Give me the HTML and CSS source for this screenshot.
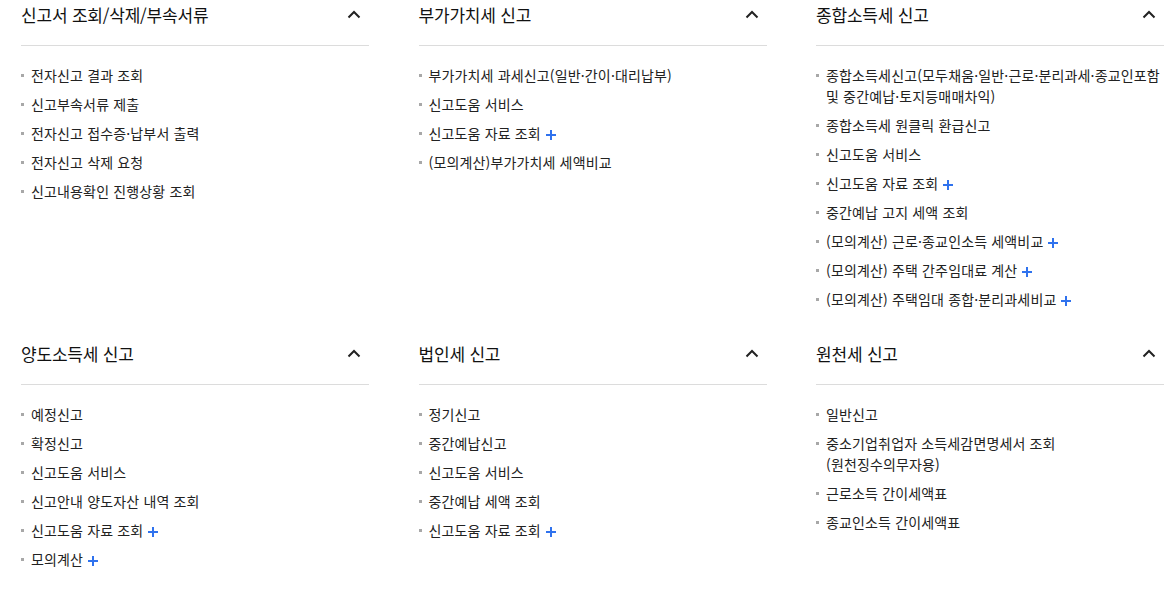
FILE: index.html
```html
<!DOCTYPE html>
<html lang="ko">
<head>
<meta charset="utf-8">
<title>신고</title>
<link rel="stylesheet" href="styles.css">
</head>
<body>
<div class="menu">
  <section class="group">
    <div class="group-head">
      <h2 class="group-title">신고서 조회/삭제/부속서류</h2>
      <svg class="chev" width="14" height="9" viewBox="0 0 14 9"><path d="M1.5 7.5 L7 2 L12.5 7.5" fill="none" stroke="#222" stroke-width="2"/></svg>
    </div>
    <ul class="items">
      <li>전자신고 결과 조회</li>
      <li>신고부속서류 제출</li>
      <li>전자신고 접수증·납부서 출력</li>
      <li>전자신고 삭제 요청</li>
      <li>신고내용확인 진행상황 조회</li>
    </ul>
  </section>
  <section class="group">
    <div class="group-head">
      <h2 class="group-title">부가가치세 신고</h2>
      <svg class="chev" width="14" height="9" viewBox="0 0 14 9"><path d="M1.5 7.5 L7 2 L12.5 7.5" fill="none" stroke="#222" stroke-width="2"/></svg>
    </div>
    <ul class="items">
      <li>부가가치세 과세신고(일반·간이·대리납부)</li>
      <li>신고도움 서비스</li>
      <li>신고도움 자료 조회<span class="plus"></span></li>
      <li>(모의계산)부가가치세 세액비교</li>
    </ul>
  </section>
  <section class="group">
    <div class="group-head">
      <h2 class="group-title">종합소득세 신고</h2>
      <svg class="chev" width="14" height="9" viewBox="0 0 14 9"><path d="M1.5 7.5 L7 2 L12.5 7.5" fill="none" stroke="#222" stroke-width="2"/></svg>
    </div>
    <ul class="items">
      <li>종합소득세신고(모두채움·일반·근로·분리과세·종교인포함 및 중간예납·토지등매매차익)</li>
      <li>종합소득세 원클릭 환급신고</li>
      <li>신고도움 서비스</li>
      <li>신고도움 자료 조회<span class="plus"></span></li>
      <li>중간예납 고지 세액 조회</li>
      <li>(모의계산) 근로·종교인소득 세액비교<span class="plus"></span></li>
      <li>(모의계산) 주택 간주임대료 계산<span class="plus"></span></li>
      <li>(모의계산) 주택임대 종합·분리과세비교<span class="plus"></span></li>
    </ul>
  </section>
  <section class="group">
    <div class="group-head">
      <h2 class="group-title">양도소득세 신고</h2>
      <svg class="chev" width="14" height="9" viewBox="0 0 14 9"><path d="M1.5 7.5 L7 2 L12.5 7.5" fill="none" stroke="#222" stroke-width="2"/></svg>
    </div>
    <ul class="items">
      <li>예정신고</li>
      <li>확정신고</li>
      <li>신고도움 서비스</li>
      <li>신고안내 양도자산 내역 조회</li>
      <li>신고도움 자료 조회<span class="plus"></span></li>
      <li>모의계산<span class="plus"></span></li>
    </ul>
  </section>
  <section class="group">
    <div class="group-head">
      <h2 class="group-title">법인세 신고</h2>
      <svg class="chev" width="14" height="9" viewBox="0 0 14 9"><path d="M1.5 7.5 L7 2 L12.5 7.5" fill="none" stroke="#222" stroke-width="2"/></svg>
    </div>
    <ul class="items">
      <li>정기신고</li>
      <li>중간예납신고</li>
      <li>신고도움 서비스</li>
      <li>중간예납 세액 조회</li>
      <li>신고도움 자료 조회<span class="plus"></span></li>
    </ul>
  </section>
  <section class="group">
    <div class="group-head">
      <h2 class="group-title">원천세 신고</h2>
      <svg class="chev" width="14" height="9" viewBox="0 0 14 9"><path d="M1.5 7.5 L7 2 L12.5 7.5" fill="none" stroke="#222" stroke-width="2"/></svg>
    </div>
    <ul class="items">
      <li>일반신고</li>
      <li>중소기업취업자 소득세감면명세서 조회<br>(원천징수의무자용)</li>
      <li>근로소득 간이세액표</li>
      <li>종교인소득 간이세액표</li>
    </ul>
  </section>
</div>
</body>
</html>
```

FILE: styles.css
```css
* { box-sizing: border-box; }
html, body {
  margin: 0;
  padding: 0;
  background: #fff;
}
body {
  font-family: "Noto Sans CJK KR", "Noto Sans", sans-serif;
  color: #222;
}
.menu {
  display: grid;
  grid-template-columns: repeat(3, 348px);
  column-gap: 49.5px;
  row-gap: 29px;
  padding-left: 21px;
  align-items: start;
}
.group-head {
  display: flex;
  align-items: center;
  justify-content: space-between;
  padding-bottom: 15px;
  border-bottom: 1px solid #dcdcdc;
}
.group-title {
  margin: 0;
  font-size: 17px;
  font-weight: 400;
  letter-spacing: -0.2px;
  line-height: 30px;
  color: #111;
}
.chev {
  display: block;
  margin-right: 8px;
  margin-top: -2px;
}
.items {
  list-style: none;
  margin: 0;
  padding: 19px 0 0;
  display: flex;
  flex-direction: column;
  gap: 8px;
}
.items li {
  position: relative;
  padding-left: 10px;
  font-size: 14px;
  letter-spacing: 0.15px;
  line-height: 21px;
  color: #222;
}
.items li::before {
  content: "";
  position: absolute;
  left: 0;
  top: 9px;
  width: 3px;
  height: 3px;
  background: #a8a8a8;
}
.plus {
  display: inline-block;
  position: relative;
  width: 10px;
  height: 10px;
  margin-left: 5px;
  vertical-align: -1px;
}
.plus::before,
.plus::after {
  content: "";
  position: absolute;
  background: #2f72ee;
}
.plus::before {
  left: 0;
  top: 4px;
  width: 10px;
  height: 2px;
}
.plus::after {
  left: 4px;
  top: 0;
  width: 2px;
  height: 10px;
}
```
